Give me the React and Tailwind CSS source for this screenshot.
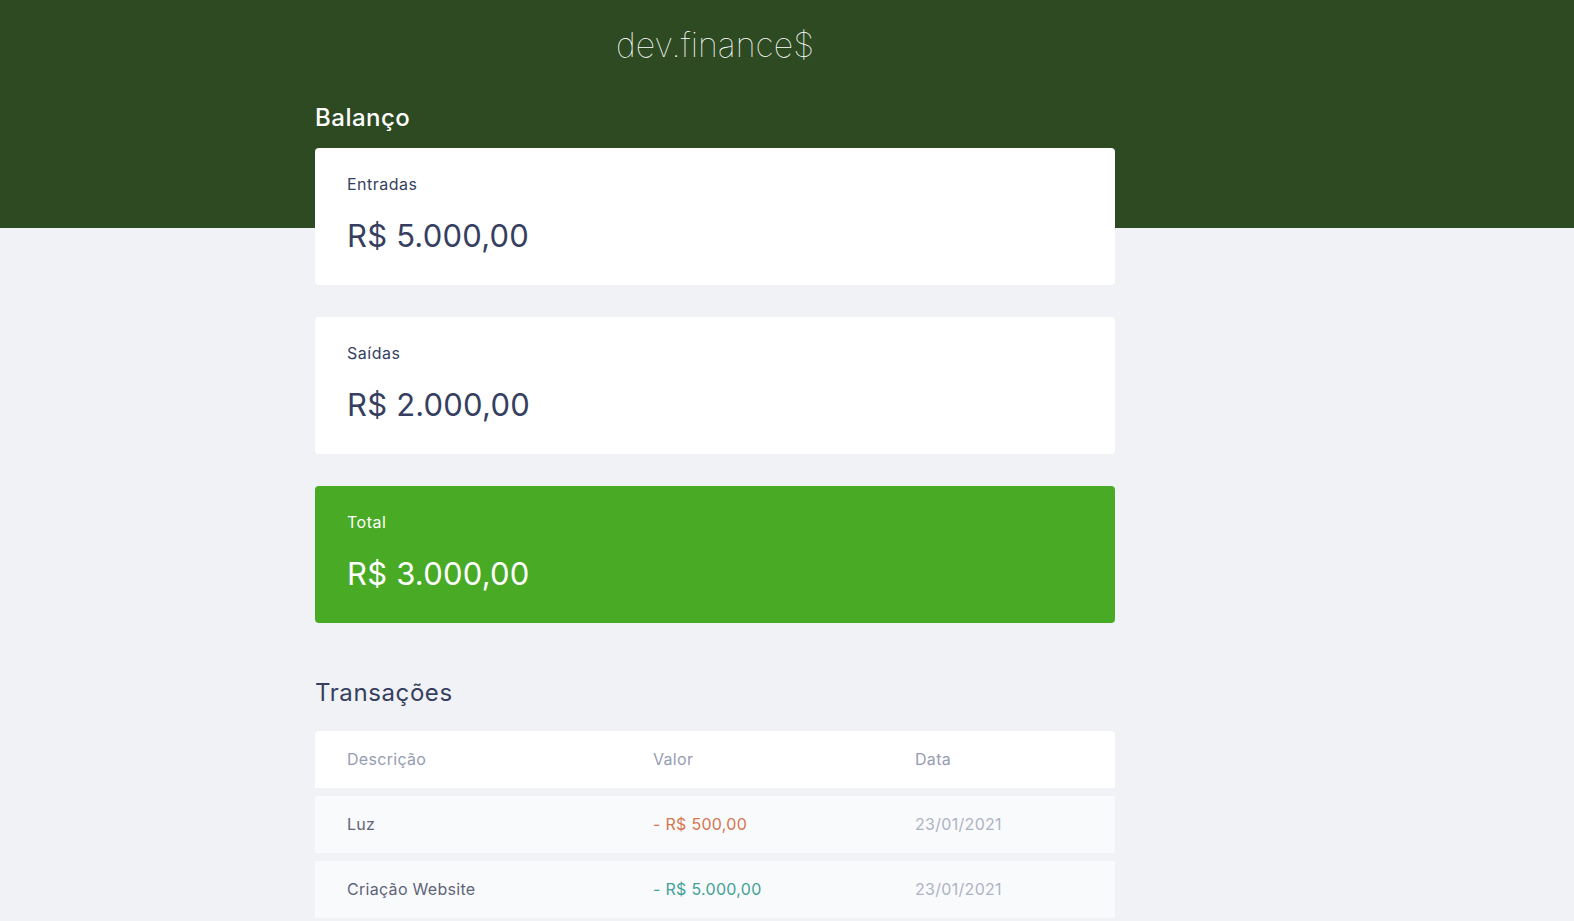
import React from 'react';

const transactions = [
  { id: 1, description: 'Luz', amount: '- R$ 500,00', type: 'expense', date: '23/01/2021' },
  { id: 2, description: 'Criação Website', amount: '- R$ 5.000,00', type: 'income', date: '23/01/2021' },
];

function Card({ title, value, total }) {
  return (
    <div className={`${total ? 'bg-[#49aa26] text-white' : 'bg-white text-[#363f5f]'} rounded px-8 pt-6 pb-[25px] mb-8`}>
      <h3 className="text-[16px] leading-6 font-normal tracking-[0.5px]">{title}</h3>
      <p className="text-[31px] leading-[48px] mt-4 tracking-[0.2px]">{value}</p>
    </div>
  );
}

export default function App() {
  return (
    <div className="min-h-screen bg-[#f0f2f5] font-['Inter','Noto_Sans',sans-serif]">
      <header className="bg-[#2d4a22] pt-[21px] pb-[160px]">
        <div className="w-[800px] ml-[315px] text-center">
          <h1 className="text-white text-[34px] leading-[47px] font-thin">dev.finance$</h1>
        </div>
      </header>

      <main className="w-[800px] ml-[315px]">
        <section className="-mt-[128px]">
          <h2 className="text-white text-[24px] leading-9 font-medium tracking-[0.5px] mb-3">Balanço</h2>
          <Card title="Entradas" value="R$ 5.000,00" />
          <Card title="Saídas" value="R$ 2.000,00" />
          <Card title="Total" value="R$ 3.000,00" total />
        </section>

        <section className="pt-5">
          <h2 className="text-[#363f5f] text-[24px] leading-9 font-normal tracking-[0.6px] mb-5">Transações</h2>
          <div className="flex flex-col gap-2 text-[#969cb3] text-[16px] tracking-[0.3px]">
            <div className="grid grid-cols-[306px_262px_1fr] bg-white rounded-t">
              <div className="px-8 py-4 leading-[25px]">Descrição</div>
              <div className="px-8 py-4 leading-[25px]">Valor</div>
              <div className="px-8 py-4 leading-[25px]">Data</div>
            </div>
            {transactions.map(t => (
              <div key={t.id} className="grid grid-cols-[306px_262px_1fr] bg-[#f9fafb]">
                <div className="px-8 py-4 leading-[25px] text-[#5e6479]">{t.description}</div>
                <div className={`px-8 py-4 leading-[25px] ${t.type === 'expense' ? 'text-[#d4764f]' : 'text-[#43a197]'}`}>{t.amount}</div>
                <div className="px-8 py-4 leading-[25px] text-[#aeb3c5]">{t.date}</div>
              </div>
            ))}
          </div>
        </section>
      </main>
    </div>
  );
}
